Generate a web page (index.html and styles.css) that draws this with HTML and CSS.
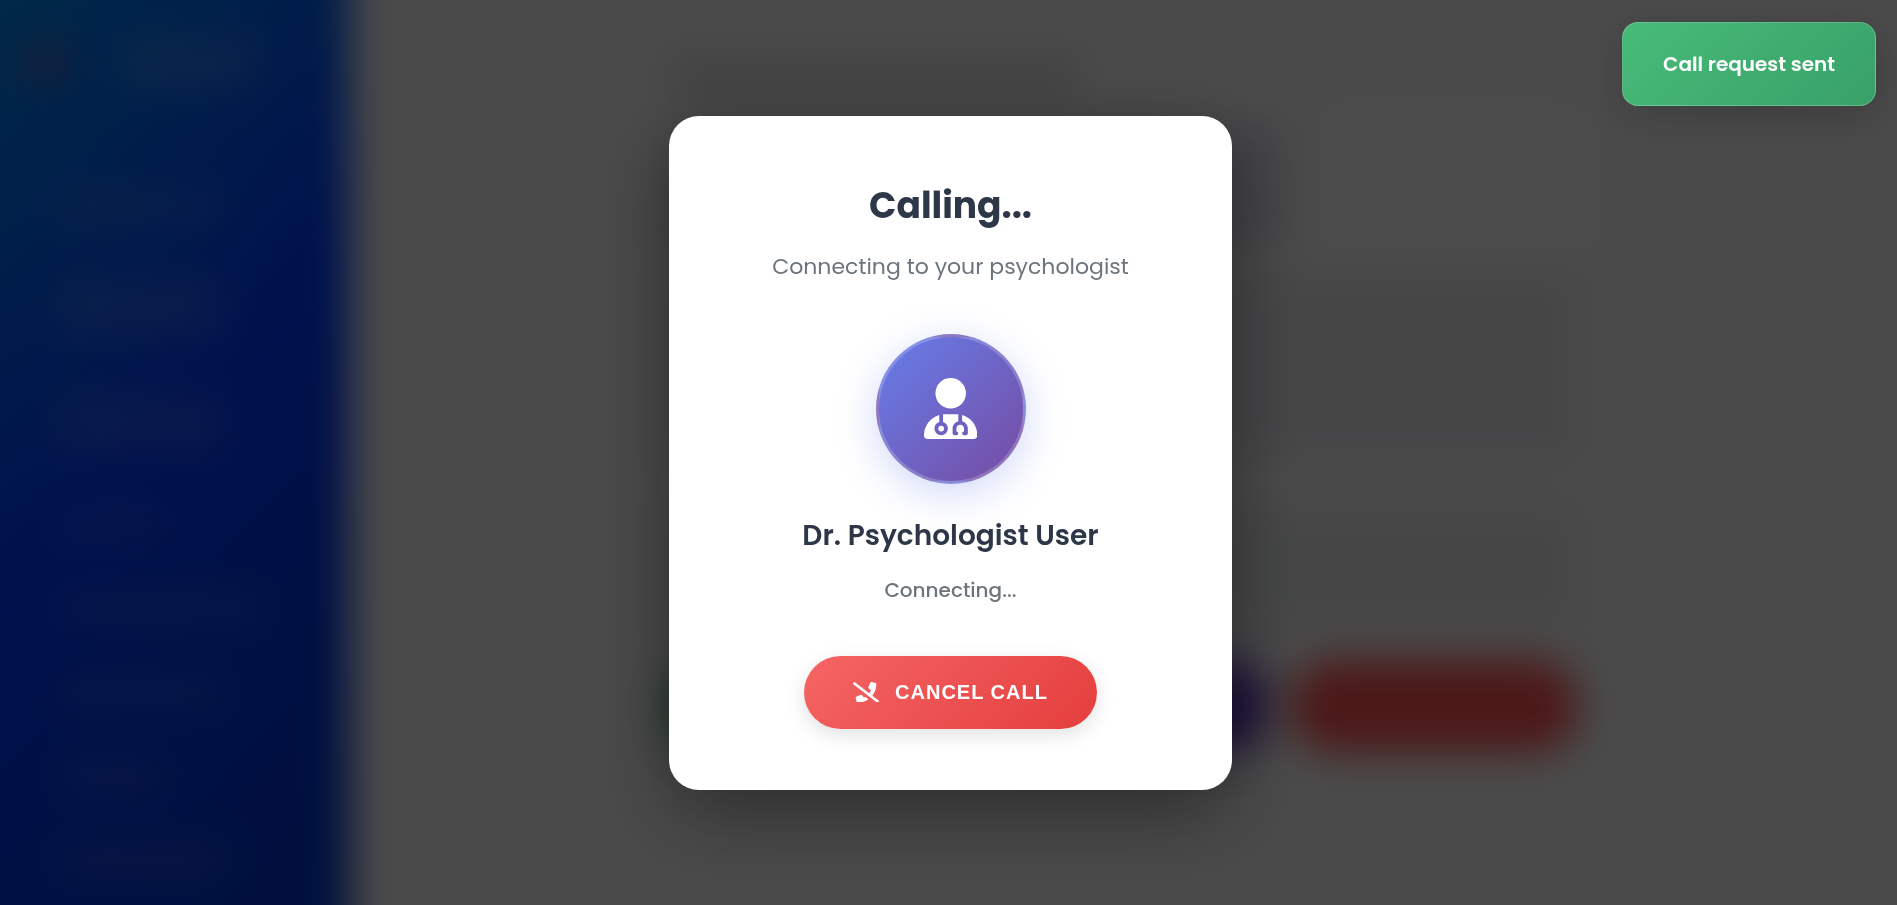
FILE: index.html
```html
<!DOCTYPE html>
<html lang="en">
<head>
<meta charset="utf-8">
<meta name="viewport" content="width=device-width, initial-scale=1">
<title>Calling...</title>
<link rel="stylesheet" href="styles.css">
</head>
<body>
<div class="backdrop" aria-hidden="true">
  <div class="app">
    <aside class="sidebar">
      <div class="brand"><span class="brand-mark"></span><span class="brand-name"></span></div>
      <div class="nav">
        <span class="nav-item"></span>
        <span class="nav-item tall"></span>
        <span class="nav-item tall"></span>
        <span class="nav-item short"></span>
        <span class="nav-item wide"></span>
        <span class="nav-item"></span>
        <span class="nav-item short"></span>
        <span class="nav-item"></span>
      </div>
    </aside>
    <main class="page">
      <div class="session">
        <div class="session-title"></div>
        <div class="session-head"><span class="head-tag"></span><span class="head-field"></span></div>
        <div class="session-block"></div>
        <div class="session-block low"></div>
        <div class="session-actions">
          <span class="action green"></span><span class="action purple"></span><span class="action red"></span>
        </div>
      </div>
    </main>
  </div>
</div>

<div class="overlay">
  <section class="call-card" role="dialog" aria-modal="true" aria-labelledby="call-title">
    <h2 class="call-title" id="call-title">Calling...</h2>
    <p class="call-subtitle">Connecting to your psychologist</p>
    <div class="avatar">
      <svg class="avatar-icon" viewBox="0 0 448 512" aria-hidden="true"><path d="M224 256A128 128 0 1 0 224 0a128 128 0 1 0 0 256zm-96 55.2C54 332.9 0 401.3 0 482.3C0 498.7 13.3 512 29.7 512H418.3c16.4 0 29.7-13.3 29.7-29.7c0-81-54-149.4-128-171.1V362c27.6 7.1 48 32.2 48 62v40c0 8.8-7.2 16-16 16H336c-8.8 0-16-7.2-16-16s7.2-16 16-16V424c0-17.7-14.3-32-32-32s-32 14.3-32 32v24c8.8 0 16 7.2 16 16s-7.2 16-16 16H256c-8.8 0-16-7.2-16-16V424c0-29.8 20.4-54.9 48-62V304.9c-6-.6-12.1-.9-18.3-.9H178.3c-6.2 0-12.3 .3-18.3 .9v65.4c23.1 6.9 40 28.3 40 53.7c0 30.9-25.1 56-56 56s-56-25.1-56-56c0-25.4 16.9-46.8 40-53.7V311.2zM144 448a24 24 0 1 0 0-48 24 24 0 1 0 0 48z"/></svg>
    </div>
    <h3 class="call-name">Dr. Psychologist User</h3>
    <p class="call-status">Connecting...</p>
    <button class="cancel" type="button">
      <svg class="cancel-icon" viewBox="0 0 640 512" aria-hidden="true"><path d="M268.2 381.4l-49.6-60.6c-6.8-8.3-18.2-11.1-28-6.9l-112 48c-10.7 4.6-16.5 16.1-13.9 27.5l24 104c2.5 10.8 12.1 18.6 23.4 18.6 100.7 0 193.7-32.4 269.7-86.9l-80-61.8c-10.9 6.5-22.1 12.7-33.6 18.1zm365.2 76.7L475.1 335.5C537.9 256.4 576 156.9 576 48c0-11.2-7.7-20.9-18.6-23.4l-104-24c-11.3-2.6-22.9 3.3-27.5 13.9l-48 112c-4.2 9.8-1.4 21.3 6.9 28l60.6 49.6c-12.2 26.1-27.9 50.3-46 72.8L45.5 3.4C38.5-2 28.5-.8 23 6.2L3.4 31.4c-5.4 7-4.2 17 2.8 22.4L594.5 508.6c7 5.4 17 4.2 22.5-2.8l19.6-25.3c5.4-6.8 4.1-16.9-3.2-22.4z"/></svg>
      <span>CANCEL CALL</span>
    </button>
  </section>
</div>

<div class="toast" role="status">Call request sent</div>
</body>
</html>
```

FILE: styles.css
```css
* { box-sizing: border-box; }

body {
  margin: 0;
  height: 100vh;
  overflow: hidden;
  font-family: "Poppins", "Inter", "Open Sans", sans-serif;
  background: #f8f9fa;
}

/* Application behind the call overlay; it overhangs the window so the blur has no pale rim */
.backdrop {
  display: flow-root;
  height: 100vh;
  overflow: clip;
}

.app {
  display: flex;
  height: calc(100vh + 120px);
  margin: -60px;
  background: #f8f8f8;
  filter: blur(20px);
}

.sidebar {
  flex: 0 0 410px;
  padding: 92px 24px 0 84px;
  background: linear-gradient(135deg, #008cf0 6%, #0038ff 50%, #0034c8 94%);
}

.brand { display: flex; align-items: center; gap: 50px; height: 60px; }
.brand-mark { width: 44px; height: 44px; border-radius: 50%; background: rgba(255, 60, 60, .35); }
.brand-name { width: 140px; height: 50px; border-radius: 12px; background: rgba(255, 255, 255, .15); }

.nav { display: flex; flex-direction: column; gap: 52px; padding: 100px 0 0 32px; }
.nav-item { flex: none; width: 170px; height: 32px; border-radius: 12px; background: rgba(255, 255, 255, .12); }
.nav-item.tall { height: 64px; }
.nav-item.short { width: 110px; }
.nav-item.wide { width: 210px; }

.page { flex: 1; padding: 60px 260px 120px 240px; }

.session {
  display: flex;
  flex-direction: column;
  gap: 32px;
  height: 100%;
  padding: 60px 120px 0 80px;
  background: #f9f9f9;
}
.session-title { flex: none; width: 410px; height: 32px; background: #d4d4d8; }
.session-head { display: flex; justify-content: space-between; height: 120px; background: #eeeff2; }
.head-tag { width: 600px; background: #dfe0ee; }
.head-field { width: 270px; background: #ffffff; }
.session-block { flex: none; height: 180px; background: #e9eaee; }
.session-block.low { height: 120px; margin-top: 20px; background: #eaebee; }
.session-actions { display: flex; gap: 24px; }
.action { flex: 1; height: 92px; border-radius: 40px; }
.green { background: #38a169; }
.purple { background: #6036c0; }
.red { background: #ff5050; }

/* Call dialog */
.overlay {
  position: fixed;
  inset: 0;
  display: flex;
  align-items: center;
  justify-content: center;
  padding-left: 4px;
  background: rgba(0, 0, 0, .7);
}

.call-card {
  display: flex;
  flex-direction: column;
  align-items: center;
  width: 90%;
  max-width: 563px;
  padding: 60px 60px 61px;
  border-radius: 30px;
  background: #ffffff;
  box-shadow: 0 25px 80px rgba(0, 0, 0, .4);
  text-align: center;
}

.call-title { margin: 0 0 13px; font-size: 36px; line-height: 60px; font-weight: 700; color: #2d3748; }
.call-subtitle { margin: 0 0 49px; font-size: 22px; line-height: 36px; color: #6c757d; }

.avatar {
  display: flex;
  align-items: center;
  justify-content: center;
  width: 150px;
  height: 150px;
  margin-bottom: 30px;
  border: 3px solid rgba(255, 255, 255, .2);
  border-radius: 50%;
  background: linear-gradient(135deg, #667eea, #764ba2);
  box-shadow: 0 10px 40px rgba(102, 126, 234, .3);
}
.avatar-icon { height: 61px; fill: #ffffff; }

.call-name { margin: 0 0 17px; font-size: 28px; line-height: 44px; font-weight: 600; color: #2d3748; }
.call-status { margin: 0 0 51px; font-size: 20px; line-height: 30px; font-weight: 500; color: #6c757d; }

.cancel {
  display: flex;
  align-items: center;
  gap: 16px;
  padding: 24px 49px;
  border: 0;
  border-radius: 50px;
  background: linear-gradient(135deg, #f56565, #e53e3e);
  box-shadow: 0 6px 20px rgba(0, 0, 0, .12);
  color: #ffffff;
  font-family: "Liberation Sans", Arial, sans-serif;
  font-size: 20px;
  line-height: 25px;
  font-weight: 700;
  letter-spacing: 1px;
}
.cancel-icon { width: 26px; fill: #ffffff; }

.toast {
  position: fixed;
  top: 22px;
  right: 21px;
  padding: 26px 40px;
  border: 1px solid rgba(255, 255, 255, .2);
  border-radius: 16px;
  background: linear-gradient(135deg, #48bb78, #38a169);
  box-shadow: 0 10px 40px rgba(0, 0, 0, .2);
  color: #ffffff;
  font-size: 20px;
  line-height: 30px;
  font-weight: 600;
}
```
